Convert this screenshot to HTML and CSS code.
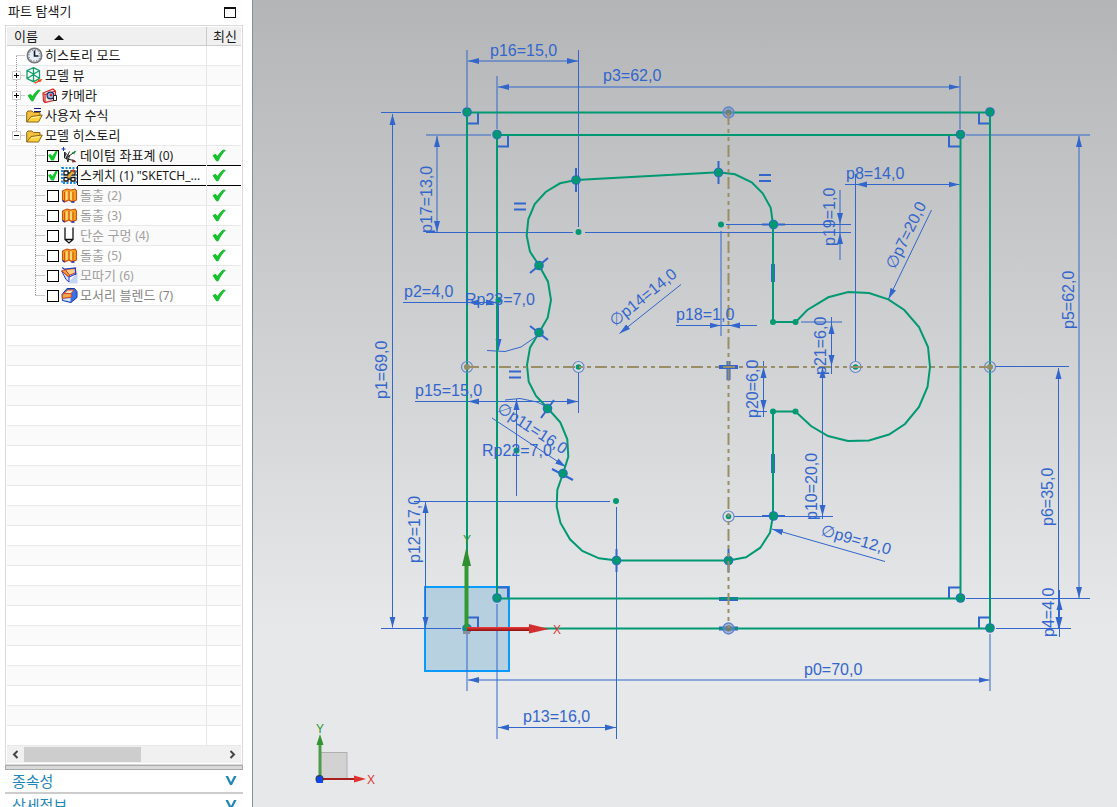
FILE: index.html
```html
<!DOCTYPE html>
<html lang="ko">
<head>
<meta charset="utf-8">
<title>파트 탐색기</title>
<link rel="stylesheet" href="styles.css">
</head>
<body>
<svg class="defs" aria-hidden="true">
  <symbol id="check" viewBox="0 0 14 13"><path d="M1 6.500 3.500 5.300 5.500 7.500C7.500 4.500 9.500 2 11.500 1L13.300 1.300C10.500 4 8 7.500 6.200 11.800L4.600 12Z" fill="#12c92b" stroke="#0fae25" stroke-width=".8"/></symbol>
  <symbol id="clock" viewBox="0 0 17 17"><circle cx="8.5" cy="8.5" r="7.2" fill="#e6edf5" stroke="#777" stroke-width="1.6"/><circle cx="8.5" cy="8.5" r="5.6" fill="none" stroke="#444" stroke-dasharray="1 1.9"/><path d="M8.5 3.5V9H12.5" fill="none" stroke="#111a33" stroke-width="1.6"/></symbol>
  <symbol id="cube" viewBox="0 0 17 17"><path d="M1 3.500 7.500.7l6 3v8l-6 3L1 11.500ZM1 3.500 7.500 7l6-3.300M7.500.7v14M1 11.500 7.500 7.500l6 4" fill="none" stroke="#129f6a" stroke-width="1.3"/><path d="M8 15.500 12 14l-.5-1.300 5-.7-2.500 3.500-.7-.8L9 16.800Z" fill="#f04a1c"/></symbol>
  <symbol id="camera" viewBox="0 0 17 17"><path d="M1 6 11 2l2.500 2V13L3 15.500 1.500 14ZM1 6l2 1.500L13.500 4M3 7.500v8" fill="#fbe3df" stroke="#d22b22" stroke-width="1.200"/><circle cx="8.500" cy="8.500" r="3.400" fill="#9cb6df" stroke="#1d2d68" stroke-width="1.200"/><circle cx="9" cy="8" r="1.300" fill="#c22"/><path d="M11.500 8.500h3v5h-3Z" fill="#fff" stroke="#222"/></symbol>
  <symbol id="folder" viewBox="0 0 17 17"><path d="M.7 15V5.500L2 4h4l1.500 1.500h6.500V8" fill="#f3c13e" stroke="#8a6416"/><path d="M.7 15 5 9.500 16.300 8 12.500 15Z" fill="#ffd23c" stroke="#8a6416"/><path d="M5.500 10.800 13.500 9.700" stroke="#fff2a8"/></symbol>
  <symbol id="datum" viewBox="0 0 17 17"><path d="M3.500 5v6M3.500 5 8 9.500M3.500 11 14 14M5.500 11 14 4.500M3.500 5 7 15M7 15 8.500 8M8.500 4.500 6 10" fill="none" stroke="#222"/><path d="M11 5.500 15.500 3.500 13 7.500Z" fill="#15943a"/><path d="M11.500 12l4 3-4.500.5Z" fill="#7d3426"/><path d="M2.500 0v4M.5 2h4" stroke="#1735c5"/></symbol>
  <symbol id="sketch" viewBox="0 0 17 17"><rect x="1" y="1" width="15" height="15" fill="#fff" stroke="#128de0" stroke-width="2" stroke-dasharray="2 1.500"/><path d="M3 4h4v4H3ZM10 4h4v4h-4ZM3 10.500h4V14H3ZM10 10.500h4V14h-4ZM7 6h3M7 12h3" fill="#fff" stroke="#111" stroke-width="1.300"/><path d="M6 10 11 4l2 1.500-5 5.500Z" fill="#f2b334" stroke="#9a6117" stroke-width=".6"/><path d="M11 3.500 12 2l2 1.500-1 1.500Z" fill="#e33a26"/></symbol>
  <symbol id="extrude" viewBox="0 0 17 17"><path d="M1.500 4 6 2l4 1 4-1 1.500 2v9L11 15l-3-2-4.500 2-2-2Z" fill="#f5a11e" stroke="#c9501a" stroke-width="1.100"/><path d="M3.500 5v9M8 4V13M12 5V14" stroke="#d8561a"/><path d="M5.700 4.500V13M10 4.500V13" stroke="#ffe080" stroke-width="1.800"/><path d="M10.500 15h3M1.500 13.500l2 1.500" stroke="#1637c0" stroke-width="1.500"/></symbol>
  <symbol id="hole" viewBox="0 0 17 17"><path d="M4 .5V12.500L8 16 12 12.500V.5M4 12.500h8" fill="#fff" stroke="#111" stroke-width="1.300"/></symbol>
  <symbol id="chamfer" viewBox="0 0 17 17"><path d="M7 16.500 16.500 5v11.500Z" fill="#c5d6f5"/><path d="M.7 4 8 10v5L5 12.500Z" fill="#cfdcf2" stroke="#2144c8"/><path d="M4 2.500 14 1.500l1 4L8 8.500Z" fill="#f9cf86" stroke="#d33a22"/><path d="M.7 4 4 2.500 8.500 8 8 10Z" fill="#f3a33c" stroke="#d33a22"/><path d="M8 10 15.500 6.500M4 2.500 1 .5M4 2 14.500 1v7" fill="none" stroke="#2144c8" stroke-width="1.200"/></symbol>
  <symbol id="blend" viewBox="0 0 17 17"><path d="M1 7.500 6 1.500h7.500l2.500 3v6L10 15.500 1.500 13.500Z" fill="#3970e8" stroke="#1238a8"/><path d="M3 6.500 6.500 3h6.500L10 6.500Z" fill="#f8e3b7" stroke="#d24a25"/><path d="M1.300 8 3 6.500h7l.5 3.500-9 1.500Z" fill="#f3a54b" stroke="#d24a25"/><path d="M2 12 9.500 11v3.800L2 13Z" fill="#d8e8ff"/></symbol>
  <symbol id="b-first" viewBox="0 0 18 20"><path class="dots" d="M9.500 10V20M9.500 9.500H18"/></symbol>
  <symbol id="b-mid" viewBox="0 0 18 20"><path class="dots" d="M9.500 0V20M9.500 9.500H18"/></symbol>
  <symbol id="b-plus" viewBox="0 0 18 20"><path class="dots" d="M9.500 0V20M9.500 9.500H18"/><path d="M5.500 5.500h8v8h-8Z" fill="#fff" stroke="#ccc"/><path d="M7 9.500h5M9.500 7v5" stroke="#000"/></symbol>
  <symbol id="b-minus" viewBox="0 0 18 20"><path class="dots" d="M9.500 0V5M9.500 9.500H18"/><path d="M5.500 5.500h8v8h-8Z" fill="#fff" stroke="#ccc"/><path d="M7 9.500h5" stroke="#000"/></symbol>
  <symbol id="b-child" viewBox="0 0 40 20"><path class="dots" d="M28.500 0V20M28.500 9.500H38"/></symbol>
  <symbol id="b-last" viewBox="0 0 40 20"><path class="dots" d="M28.500 0V10M28.500 9.500H38"/></symbol>
  <symbol id="chevron" viewBox="0 0 12 10"><path d="M.5 0h2.500l3 6L9 0h2.500L7 9H5Z" fill="#1e86b8"/></symbol>
</svg>
<div class="app">
  <aside class="navigator">
    <header class="title">
      <h1>파트 탐색기</h1>
      <button class="maximize" aria-label="최대화"></button>
    </header>
    <div class="tree">
      <table>
        <thead><tr><th>이름<span class="sort"></span></th><th>최신</th></tr></thead>
        <tbody>
          <tr><td><div class="node"><svg class="branch"><use href="#b-first"/></svg><svg class="icon"><use href="#clock"/></svg><span class="label">히스토리 모드</span></div></td><td></td></tr>
          <tr><td><div class="node"><button class="toggle" aria-label="펼치기"><svg class="branch"><use href="#b-plus"/></svg></button><svg class="icon"><use href="#cube"/></svg><span class="label">모델 뷰</span></div></td><td></td></tr>
          <tr><td><div class="node"><button class="toggle" aria-label="펼치기"><svg class="branch"><use href="#b-plus"/></svg></button><svg class="state"><use href="#check"/></svg><svg class="icon"><use href="#camera"/></svg><span class="label">카메라</span></div></td><td></td></tr>
          <tr><td><div class="node"><svg class="branch"><use href="#b-mid"/></svg><svg class="icon"><use href="#folder"/><path d="M8 1.500h7M8 4.500h7" stroke="#151c6b"/></svg><span class="label">사용자 수식</span></div></td><td></td></tr>
          <tr><td><div class="node"><button class="toggle" aria-label="접기"><svg class="branch"><use href="#b-minus"/></svg></button><svg class="icon"><use href="#folder"/></svg><span class="label">모델 히스토리</span></div></td><td></td></tr>
          <tr><td><div class="node"><svg class="branch child"><use href="#b-child"/></svg><input type="checkbox" id="f0" checked><svg class="icon"><use href="#datum"/></svg><label class="label" for="f0">데이텀 좌표계 <span class="latin">(0)</span></label></div></td><td><svg class="ok"><use href="#check"/></svg></td></tr>
          <tr class="selected"><td><div class="node"><svg class="branch child"><use href="#b-child"/></svg><input type="checkbox" id="f1" checked><svg class="icon"><use href="#sketch"/></svg><label class="label" for="f1">스케치 <span class="latin">(1) "SKETCH_...</span></label></div></td><td><svg class="ok"><use href="#check"/></svg></td></tr>
          <tr class="off"><td><div class="node"><svg class="branch child"><use href="#b-child"/></svg><input type="checkbox" id="f2"><svg class="icon"><use href="#extrude"/></svg><label class="label" for="f2">돌출 <span class="latin">(2)</span></label></div></td><td><svg class="ok"><use href="#check"/></svg></td></tr>
          <tr class="off"><td><div class="node"><svg class="branch child"><use href="#b-child"/></svg><input type="checkbox" id="f3"><svg class="icon"><use href="#extrude"/></svg><label class="label" for="f3">돌출 <span class="latin">(3)</span></label></div></td><td><svg class="ok"><use href="#check"/></svg></td></tr>
          <tr class="off"><td><div class="node"><svg class="branch child"><use href="#b-child"/></svg><input type="checkbox" id="f4"><svg class="icon"><use href="#hole"/></svg><label class="label" for="f4">단순 구멍 <span class="latin">(4)</span></label></div></td><td><svg class="ok"><use href="#check"/></svg></td></tr>
          <tr class="off"><td><div class="node"><svg class="branch child"><use href="#b-child"/></svg><input type="checkbox" id="f5"><svg class="icon"><use href="#extrude"/></svg><label class="label" for="f5">돌출 <span class="latin">(5)</span></label></div></td><td><svg class="ok"><use href="#check"/></svg></td></tr>
          <tr class="off"><td><div class="node"><svg class="branch child"><use href="#b-child"/></svg><input type="checkbox" id="f6"><svg class="icon"><use href="#chamfer"/></svg><label class="label" for="f6">모따기 <span class="latin">(6)</span></label></div></td><td><svg class="ok"><use href="#check"/></svg></td></tr>
          <tr class="off current"><td><div class="node"><svg class="branch child"><use href="#b-last"/></svg><input type="checkbox" id="f7"><svg class="icon"><use href="#blend"/></svg><label class="label" for="f7">모서리 블렌드 <span class="latin">(7)</span></label></div></td><td><svg class="ok"><use href="#check"/></svg></td></tr>
          <tr><td></td><td></td></tr><tr><td></td><td></td></tr><tr><td></td><td></td></tr><tr><td></td><td></td></tr>
          <tr><td></td><td></td></tr><tr><td></td><td></td></tr><tr><td></td><td></td></tr><tr><td></td><td></td></tr>
          <tr><td></td><td></td></tr><tr><td></td><td></td></tr><tr><td></td><td></td></tr><tr><td></td><td></td></tr>
          <tr><td></td><td></td></tr><tr><td></td><td></td></tr><tr><td></td><td></td></tr><tr><td></td><td></td></tr>
          <tr><td></td><td></td></tr><tr><td></td><td></td></tr><tr><td></td><td></td></tr><tr><td></td><td></td></tr>
          <tr><td></td><td></td></tr><tr><td></td><td></td></tr>
        </tbody>
      </table>
      <div class="scroll">
        <button aria-label="왼쪽"><svg viewBox="0 0 17 17"><path d="M10.500 5 7 8.500 10.500 12"/></svg></button>
        <div class="track"><div class="thumb"></div></div>
        <button aria-label="오른쪽"><svg viewBox="0 0 17 17"><path d="M6.500 5 10 8.500 6.500 12"/></svg></button>
      </div>
    </div>
    <div class="splitter"></div>
    <button class="section">종속성<svg><use href="#chevron"/></svg></button>
    <button class="section">상세정보<svg><use href="#chevron"/></svg></button>
  </aside>
  <main class="canvas">
    <svg class="drawing" viewBox="253 0 864 807" preserveAspectRatio="xMinYMin meet" role="img" aria-label="스케치">
      <defs>
        <marker id="arrow" markerUnits="userSpaceOnUse" markerWidth="12" markerHeight="8" refX="11" refY="4" orient="auto-start-reverse"><path d="M0 1 11 4 0 7Z" fill="#3366cc"/></marker>
        <g id="dot"><circle r="4.800" fill="#3366cc"/><circle r="3.900" fill="#009973"/></g>
        <g id="ring"><circle r="5.500" fill="#e2e4e8" fill-opacity=".6" stroke="#6685cc" stroke-width="1.200"/><circle r="2.800" fill="#009973"/></g>
        <g id="mid"><circle r="5.500" fill="#6f8fd0" fill-opacity=".6" stroke="#5f80cc" stroke-width="1.300"/><circle r="3" fill="#6b8078"/></g>
        <linearGradient id="redShaft" x1="0" y1="0" x2="0" y2="1"><stop offset="0" stop-color="#f03b3b"/><stop offset="1" stop-color="#8c1010"/></linearGradient>
      </defs>

      <rect x="425" y="587" width="84" height="84" fill="#66a9d2" fill-opacity=".36" stroke="#0a9bfa" stroke-width="2"/>

      <g class="line">
        <path d="M467 50V107M578.500 50V227M497 76V129M960 76V129M381 112.500H461M381 628.500H461M426 135H491M426 232.500H573M585 232.500H851M726 224.500H851M855.500 174V361M966 135H1090M966 598.500H1090M996 366.500H1069M996 628.500H1071M467 634V691M990 634V691M497 604V739M616.500 507V739M414 501.500H610M721 231V336M754 411.500H767M801 322H842M734 516.500H833M578.500 372V413"/>
        <path d="M845 184.500H856M403 302.500H468M415 401.500H468M831.500 317V323M831.500 366V374M763.500 361V368M763.500 411V417M822.500 515V519M1059.500 590V600M1059.500 627V637M721 325.500H729M840 224V233M516.500 450V496"/>
        <path d="M487 350.500 505 351.500 521 347 537 336M505 400 520 398.500 537 402 547 407"/>
      </g>
      <g class="line both">
        <path d="M468 61H578"/><path d="M498 87H959.500"/><path d="M392.500 114V627.500"/><path d="M437 136V232"/>
        <path d="M856 184.500H959.500"/><path d="M1079 136V598"/><path d="M1058.500 368V628"/><path d="M1059.500 599V628"/>
        <path d="M468 680H989.500"/><path d="M498 727.500H616"/><path d="M425.500 502V628"/><path d="M468 302.500H497"/>
        <path d="M468 401.500H578"/><path d="M822.500 367V516"/><path d="M831.500 323V366"/><path d="M763.500 367V411"/>
      </g>
      <g class="line end">
        <path d="M840 190V224"/><path d="M840 260V233"/><path d="M676 325.500H720.500"/><path d="M757 325.500H729"/>
        <path d="M931.500 210 888.500 299"/><path d="M885 561.500 772 529"/><path d="M681 284.500 619.500 333.500"/><path d="M492 418 566 467"/>
        <path d="M498.500 300V350"/><path d="M516.500 450V399"/>
      </g>

      <path class="mark" d="M478 113V123.500H468M508 136V146.500H498M979 113V123.500H990M949 136V146.500H960M467 617.500H478V628M497 587.500H508V598M949 598V587.500H960M979 628V617.500H990"/>
      <path class="mark" d="M514 203.500H526M514 209.500H526M759 175H771M759 181H771M509 371.500H521M509 377.500H521"/>
      <path class="bar" d="M773 264V282M773 454V473M719 599H738M719 628.500H738M719 367H738M728.500 361V380"/>

      <g class="shape">
        <rect x="467" y="112.500" width="523" height="516"/>
        <rect x="497" y="135" width="463.500" height="463.500"/>
        <path d="M576 180 718.500 172.300 735 174.300 751.700 182.300 762.700 193.300 770.700 207.700 773 224.300V322H795.700L807.300 310 828.300 297.300 848.300 292 869 293 888.300 299.300 904.300 310 919 327 928 347 930 367 927.500 387 919 407 905 424 889 434.500 869 440.500 848 441 828 436 811 426 795.500 411.500H773V516L770 532.700 760.300 547.700 746 557.300 728.500 560.500H616.700L599 558.300 582.300 551 570 539.300 560.500 523 556.700 506.700 557.300 490 563 473.500 568.300 456.700 567.300 439.300 560.300 422.300 547.700 408.300 536 396 528.700 381.700 527 365 530 347.700 539 332.700 547.700 317.700 551 300 548 281.700 539 265.300 530 251.700 526.700 235.700 528.300 219.300 534.700 204 545.700 192 560 183.300Z"/>
      </g>
      <path class="tangent" d="M576 168V192M718.500 161V184M762 224.500H785M530 273 548 258M530 326 548 340M541 418 554 400M552 469 573 480M762 516H785M728.500 549V572M616.500 549V572"/>

      <use href="#dot" x="467" y="112"/><use href="#dot" x="990" y="112"/><use href="#dot" x="497" y="134.500"/><use href="#dot" x="960.500" y="134.500"/>
      <use href="#dot" x="497" y="598"/><use href="#dot" x="960.500" y="598"/><use href="#dot" x="467" y="628.500"/><use href="#dot" x="990" y="628"/>
      <use href="#dot" x="576" y="180"/><use href="#dot" x="718.500" y="172.500"/><use href="#dot" x="773.500" y="224.500"/><use href="#dot" x="539" y="265.500"/>
      <use href="#dot" x="539" y="332.500"/><use href="#dot" x="547.500" y="408.500"/><use href="#dot" x="563" y="473.500"/><use href="#dot" x="773.500" y="516"/>
      <use href="#dot" x="728.500" y="560.500"/><use href="#dot" x="616.500" y="560.500"/>
      <g fill="#009973"><circle cx="578.500" cy="232" r="3"/><circle cx="721" cy="224.500" r="3"/><circle cx="616" cy="501" r="3"/><circle cx="498.500" cy="300" r="3"/><circle cx="516.500" cy="450.500" r="3"/><circle cx="773" cy="322" r="3"/><circle cx="795.500" cy="322" r="3"/><circle cx="773" cy="411.500" r="3"/><circle cx="795.500" cy="411.500" r="3"/></g>
      <use href="#ring" x="578.500" y="367"/><use href="#ring" x="855.500" y="367"/><use href="#ring" x="728.500" y="516.500"/>
      <g fill="none" stroke="#6685cc" stroke-width="1.200"><circle cx="467" cy="367" r="5.500"/><circle cx="990" cy="367" r="5.500"/></g>
      <g fill="#8d8b68"><circle cx="467" cy="367" r="3"/><circle cx="990" cy="367" r="3"/></g>
      <use href="#mid" x="728.500" y="112.500"/><use href="#mid" x="728.500" y="628.500"/>
      <path class="center" d="M467 367H990M728.500 113V628"/>

      <g class="dim">
        <text x="490" y="56">p16=15,0</text>
        <text x="603" y="81">p3=62,0</text>
        <text x="846" y="179">p8=14,0</text>
        <text x="404" y="297">p2=4,0</text>
        <text x="465" y="305">Rp23=7,0</text>
        <text x="415" y="396">p15=15,0</text>
        <text x="482" y="456">Rp22=7,0</text>
        <text x="676" y="320">p18=1,0</text>
        <text x="804" y="675">p0=70,0</text>
        <text x="523" y="722">p13=16,0</text>
        <text transform="translate(387 399) rotate(-90)">p1=69,0</text>
        <text transform="translate(432 233) rotate(-90)">p17=13,0</text>
        <text transform="translate(835 246) rotate(-90)">p19=1,0</text>
        <text transform="translate(1074 329) rotate(-90)">p5=62,0</text>
        <text transform="translate(1053 526) rotate(-90)">p6=35,0</text>
        <text transform="translate(1054 637) rotate(-90)">p4=4,0</text>
        <text transform="translate(826 375) rotate(-90)">p21=6,0</text>
        <text transform="translate(758 418) rotate(-90)">p20=6,0</text>
        <text transform="translate(817 520) rotate(-90)">p10=20,0</text>
        <text transform="translate(420 563) rotate(-90)">p12=17,0</text>
        <text transform="translate(895 270) rotate(-64)"><tspan class="dia">∅</tspan>p7=20,0</text>
        <text transform="translate(820 535) rotate(16)"><tspan class="dia">∅</tspan>p9=12,0</text>
        <text transform="translate(615 327) rotate(-39)"><tspan class="dia">∅</tspan>p14=14,0</text>
        <text transform="translate(496 411) rotate(33)"><tspan class="dia">∅</tspan>p11=16,0</text>
      </g>

      <rect x="464.500" y="564" width="4" height="64" fill="#339933"/><path d="M466.500 547 471 566H462Z" fill="#2f8f2f"/>
      <rect x="467" y="627" width="64" height="4" fill="url(#redShaft)"/><path d="M549 629 529 624V633.500Z" fill="#d32f2f"/>
      <rect x="463" y="631" width="7" height="3" fill="#8a8fa0"/>
      <text class="axis y" x="467" y="544">Y</text><text class="axis x" x="557" y="634">X</text>

      <rect x="320" y="752.500" width="27" height="26" fill="#d2d2d2" stroke="#b0b0b0"/>
      <path d="M318.500 744H321.500V779H318.500Z" fill="#4e9b4e"/><path d="M320 734 323.500 745H316.500Z" fill="#2f962f"/>
      <rect x="323" y="778" width="32" height="2" fill="#a81d1d"/><path d="M366 779 354 775.500V782.500Z" fill="#e03030"/>
      <circle cx="319.500" cy="779" r="4" fill="#333c55"/><path d="M317 777 322 776 323 783H316.500Z" fill="#0d46f0"/>
      <text class="axis y" x="320" y="733">Y</text><text class="axis x" x="371" y="784">X</text>
    </svg>
  </main>
</div>
</body>
</html>
```
FILE: styles.css
```css
* { box-sizing: border-box; }

body {
  margin: 0;
  background: #fff;
  color: #1a1a1a;
  font-family: "Noto Sans CJK KR", "Noto Sans", sans-serif;
  font-size: 13px;
}

button {
  margin: 0;
  padding: 0;
  border: 0;
  background: none;
  color: inherit;
  font: inherit;
}

.defs { position: absolute; width: 0; height: 0; }
.dots { fill: none; stroke: #999; stroke-dasharray: 1 1; }

.app { display: flex; height: 100vh; overflow: hidden; }

.navigator {
  flex: none;
  width: 253px;
  padding-left: 5px;
  padding-right: 9px;
  border-right: 1px solid #868e96;
  overflow: hidden;
}

.title {
  display: flex;
  align-items: center;
  justify-content: space-between;
  height: 25px;
  padding: 0 7px 0 3px;
}
.title h1 { height: 25px; margin: 0; font-size: 13px; font-weight: 400; line-height: 22px; }
.maximize { width: 12px; height: 11px; border: 1px solid #111; border-top-width: 2px; }

.tree { border: 1px solid #d9d9d9; padding: 1px; }

table {
  width: 100%;
  border-collapse: separate;
  border-spacing: 0;
  table-layout: fixed;
}
th, td { padding: 0; border-bottom: 1px solid #e9e9e9; height: 20px; }
th {
  height: 19px;
  padding-left: 7px;
  border-bottom-color: #ccc;
  background: #f0f0f0;
  font-weight: 400;
  line-height: 18px;
  text-align: left;
}
th:first-child, td:first-child { border-right: 1px solid #e6e6e6; }
th:first-child { border-right-color: #ccc; }
th:last-child { width: 34px; padding-left: 6px; white-space: nowrap; }
tbody tr:nth-child(even) { background: #fafafa; }

.sort {
  display: inline-block;
  margin-left: 16px;
  border: 5px solid transparent;
  border-top: 0;
  border-bottom-color: #111;
  vertical-align: 1px;
}

.node { display: flex; align-items: center; height: 19px; }
.branch { flex: none; display: block; width: 18px; height: 20px; }
.branch.child { width: 40px; }
.toggle { height: 20px; }
.icon { flex: none; width: 17px; height: 17px; margin-left: 1px; overflow: visible; }
.state { flex: none; width: 14px; height: 13px; margin-left: 2px; }
.label { flex: 1; height: 19px; padding-left: 2px; line-height: 17px; white-space: nowrap; }
.latin { font-family: "Noto Sans", sans-serif; font-size: 12px; }
.off .label { color: #a0a0a0; }
.off.current .label { color: #858585; }
.selected .label { box-shadow: 0 -1px #000, 0 1px #000, -1px 0 #000; }
.selected td:last-child { border-bottom-color: #000; box-shadow: 0 -1px #000; }
.ok { display: block; width: 14px; height: 13px; margin-left: 5px; }

input[type="checkbox"] {
  appearance: none;
  flex: none;
  width: 12px;
  height: 12px;
  margin: 0 1px 0 0;
  border: 1px solid #000;
  background: #fff;
}
input[type="checkbox"]:checked::before {
  content: "";
  display: block;
  height: 10px;
  background: #12c92b;
  clip-path: polygon(0 45%, 25% 35%, 42% 55%, 80% 0, 100% 0, 58% 100%, 32% 100%);
}

.scroll { display: flex; height: 17px; background: #f0f0f0; }
.scroll svg { display: block; width: 17px; height: 17px; }
.scroll path { fill: none; stroke: #444; stroke-width: 2; }
.track { flex: 1; padding: 1px 0; }
.thumb { width: 117px; height: 15px; background: #cdcdcd; }

.splitter { height: 5px; border: 1px solid #aaa; background: #d9d9d9; }

.section {
  display: flex;
  align-items: center;
  justify-content: space-between;
  width: 100%;
  height: 24px;
  padding: 0 6px 0 7px;
  border-bottom: 2px solid #ccc;
  color: #1e86b8;
  font-size: 15px;
  line-height: 22px;
}
.section svg { width: 12px; height: 10px; }

.canvas {
  flex: 1;
  min-width: 0;
  background: linear-gradient(#b4b5b6, #e6e8e9 78%, #e6e8ea);
}
.drawing { display: block; width: 100%; height: 100%; }

.line path { fill: none; stroke: #3366cc; stroke-width: 1; }
.both path { marker-start: url(#arrow); marker-end: url(#arrow); }
.end path { marker-end: url(#arrow); }
.mark { fill: none; stroke: #3366cc; stroke-width: 2; }
.tangent { fill: none; stroke: #3366cc; stroke-width: 2; }
.bar { fill: none; stroke: #3366cc; stroke-width: 4; }
.shape { fill: none; stroke: #009973; stroke-width: 2; }
.center { fill: none; stroke: #998f66; stroke-width: 2; stroke-dasharray: 12 4 4 4 4 4; }

.dim { fill: #3366cc; font-family: "Liberation Sans", Arial, sans-serif; font-size: 16px; }
.dia { font-family: "DejaVu Sans", sans-serif; font-size: 16px; }
.axis { font-family: "Liberation Sans", Arial, sans-serif; font-size: 12px; text-anchor: middle; }
.axis.x { fill: #d93a3a; }
.axis.y { fill: #2f962f; }
```
